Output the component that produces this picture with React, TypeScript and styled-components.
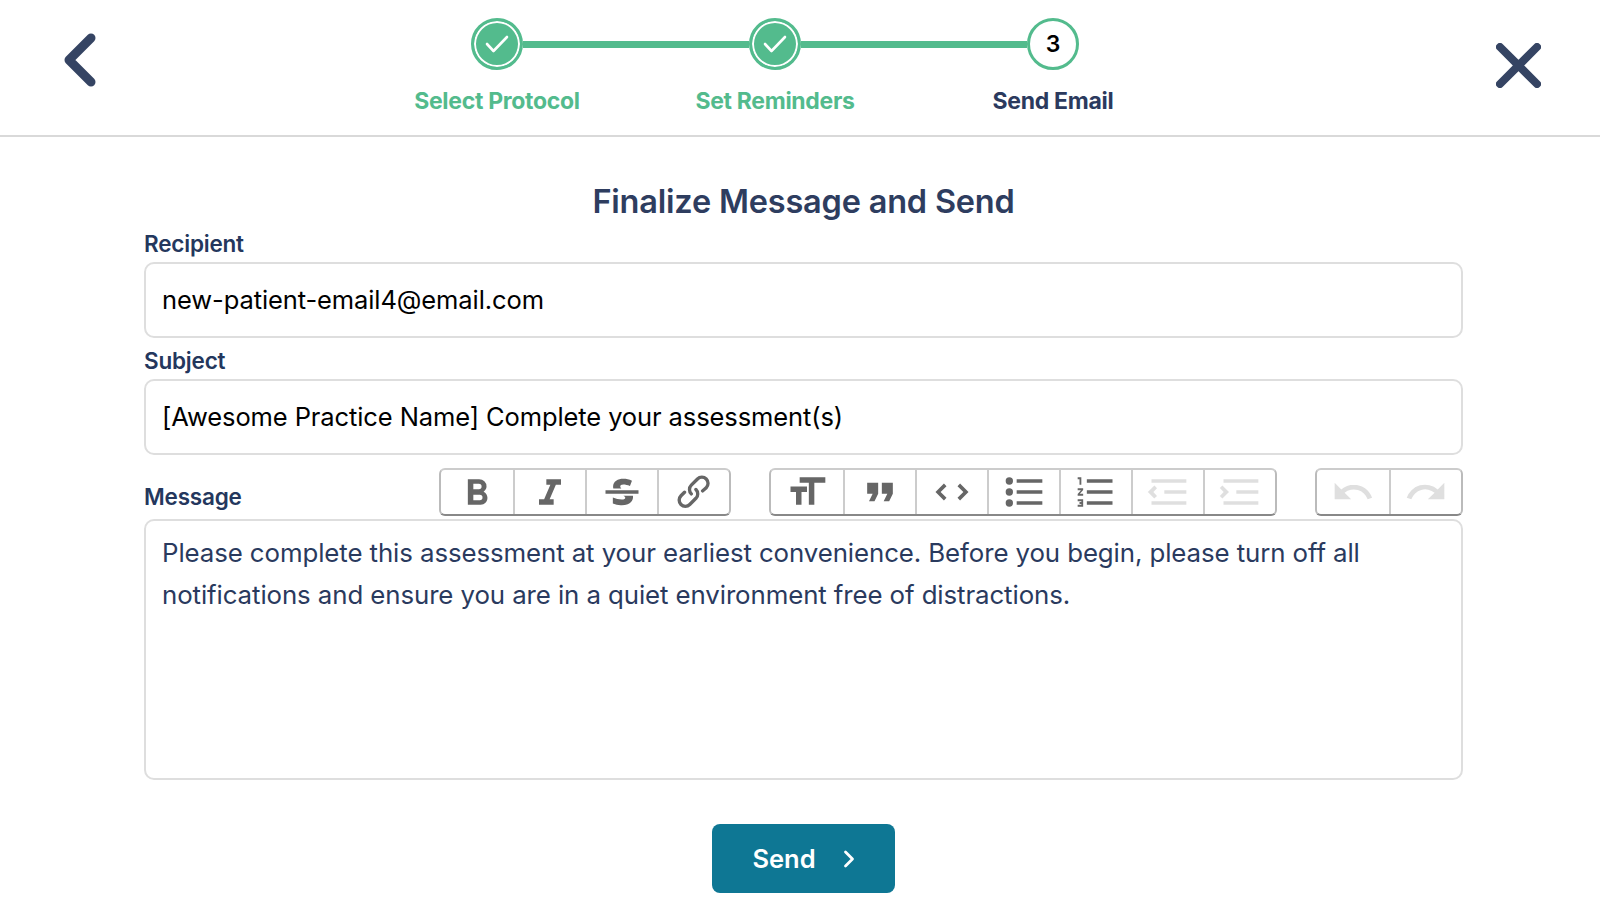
import styled, { createGlobalStyle } from 'styled-components'

const GlobalStyle = createGlobalStyle`
  html, body {
    margin: 0;
    padding: 0;
    background: #fff;
    font-family: Inter, Lato, "Liberation Sans", sans-serif;
  }
  * {
    box-sizing: border-box;
  }
`

const Page = styled.div`
  width: 1600px;
  height: 918px;
  overflow: hidden;
`

const Header = styled.header`
  display: flex;
  align-items: flex-start;
  height: 137px;
  padding: 18px 59px 0 64px;
  border-bottom: 2px solid #d9d9d9;
`

const HeaderIcon = styled.svg<{ $top: number }>`
  flex: none;
  margin-top: ${props => props.$top}px;
  fill: none;
  stroke: #354463;
  stroke-linecap: round;
  stroke-linejoin: round;
`

const Stepper = styled.nav`
  width: 834px;
  margin-left: 262px;
  margin-right: auto;
`

const Track = styled.div`
  display: flex;
  align-items: center;
  width: 608px;
  margin: 0 auto;
`

const Circle = styled.div<{ $done?: boolean }>`
  flex: none;
  display: flex;
  align-items: center;
  justify-content: center;
  width: 52px;
  height: 52px;
  border-radius: 50%;
  border: 3px solid #53bb8d;
  background: ${props => (props.$done ? '#53bb8d' : '#fff')};
  box-shadow: ${props => (props.$done ? 'inset 0 0 0 2px #fff' : 'none')};
  color: #000;
  font-size: 23px;
  font-weight: 600;
`

const Line = styled.div`
  flex: 1;
  height: 7px;
  background: #53bb8d;
`

const Labels = styled.div`
  display: grid;
  grid-template-columns: repeat(3, 1fr);
  margin-top: 16px;
`

const StepLabel = styled.div<{ $done?: boolean }>`
  text-align: center;
  font-size: 23px;
  line-height: 30px;
  font-weight: 700;
  letter-spacing: -0.3px;
  color: ${props => (props.$done ? '#53bb8d' : '#2b3a5e')};
`

const Form = styled.main`
  padding: 0 137px 0 144px;
`

const Title = styled.h1`
  margin: 42px 0 0;
  text-align: center;
  font-size: 32.5px;
  line-height: 46px;
  font-weight: 600;
  letter-spacing: -0.2px;
  color: #2e3d5f;
`

const Label = styled.label`
  display: block;
  font-size: 22.5px;
  line-height: 28px;
  font-weight: 600;
  letter-spacing: -0.2px;
  color: #24375d;
`

const RecipientLabel = styled(Label)`
  margin-top: 5px;
  margin-bottom: 4px;
`

const SubjectLabel = styled(Label)`
  margin-top: 9px;
  margin-bottom: 4px;
`

const Input = styled.input`
  display: block;
  width: 100%;
  height: 76px;
  padding: 0 16px 2px;
  border: 2px solid #dedede;
  border-radius: 10px;
  outline: none;
  background: #fff;
  color: #000;
  font-family: inherit;
  font-size: 25.5px;
  letter-spacing: -0.1px;
`

const MessageRow = styled.div`
  display: flex;
  align-items: flex-end;
  gap: 38px;
  margin-top: 13px;
`

const MessageLabel = styled(Label)`
  margin-right: auto;
  padding-bottom: 5px;
`

const ButtonGroup = styled.div`
  display: flex;
  height: 48px;
  border: 2px solid #bbb;
  border-top-color: #ccc;
  border-bottom-color: #888;
  border-radius: 6px;
`

const ToolButton = styled.button<{ $muted?: boolean }>`
  display: flex;
  align-items: center;
  justify-content: center;
  width: 72px;
  padding: 0;
  border: none;
  border-left: 2px solid #ccc;
  background: transparent;
  &:first-child {
    border-left: none;
  }
  svg {
    width: 44px;
    height: 44px;
    fill: ${props => (props.$muted ? '#dfdfdf' : '#666')};
  }
`

const Editor = styled.div`
  height: 261px;
  margin-top: 3px;
  padding: 11px 16px;
  border: 2px solid #dedede;
  border-radius: 10px;
  color: #2a3a5e;
  font-size: 25.85px;
  letter-spacing: -0.1px;
  line-height: 42px;
`

const Actions = styled.div`
  display: flex;
  justify-content: center;
  margin-top: 44px;
`

const SendButton = styled.button`
  display: flex;
  align-items: center;
  justify-content: center;
  gap: 27px;
  width: 183px;
  height: 69px;
  border: none;
  border-radius: 8px;
  background: #0e7794;
  color: #fff;
  font-family: inherit;
  font-size: 25.5px;
  font-weight: 600;
`

const Check = () => (
  <svg width="26" height="20" viewBox="0 0 26 20" fill="none" stroke="#fff" strokeWidth="2.6" strokeLinecap="round" strokeLinejoin="round">
    <path d="M3 10l6.5 7L23 3" />
  </svg>
)

const icons = {
  bold: 'M15.6 11.8c1-.7 1.6-1.8 1.6-2.8a4 4 0 0 0-4-4H7v14h7c2.1 0 3.7-1.7 3.7-3.8 0-1.5-.8-2.8-2.1-3.4zM10 7.5h3a1.5 1.5 0 1 1 0 3h-3v-3zm3.5 9H10v-3h3.5a1.5 1.5 0 1 1 0 3z',
  italic: 'M10 5v3h2.2l-3.4 8H6v3h8v-3h-2.2l3.4-8H18V5h-8z',
  strike: 'M12.73 14l.28.14c.26.15.45.3.57.44.12.14.18.3.18.5 0 .3-.15.56-.44.75-.3.2-.76.3-1.39.3A13.52 13.52 0 0 1 7 14.95v3.37a10.64 10.64 0 0 0 4.84.88c1.26 0 2.35-.19 3.29-.56.93-.37 1.64-.9 2.14-1.57s.74-1.45.74-2.32c0-.26-.02-.51-.06-.75h-5.21zM7.24 10c-.07-.3-.1-.62-.1-.96 0-1.4.6-2.5 1.7-3.2 1.1-.7 2.4-1 3.9-1 1.6 0 3.2.3 4.7 1l-1.1 2.9c-1.3-.5-2.5-.8-3.6-.8-.6 0-1 .1-1.3.3-.3.2-.4.5-.4.8 0 .4.2.7.6 1H7.24zM3 13h18v-2H3v2z',
  link: 'M9.88 13.7a4.3 4.3 0 0 1 0-6.07l3.37-3.37a4.26 4.26 0 0 1 6.07 0 4.3 4.3 0 0 1 0 6.06l-1.96 1.72a.91.91 0 1 1-1.3-1.3l1.97-1.71a2.46 2.46 0 0 0-3.48-3.48l-3.38 3.37a2.46 2.46 0 0 0 0 3.48.91.91 0 1 1-1.3 1.3zM4.25 19.46a4.3 4.3 0 0 1 0-6.07l1.93-1.9a.91.91 0 1 1 1.3 1.3l-1.93 1.9a2.46 2.46 0 0 0 3.48 3.48l3.37-3.38c.96-.96.96-2.52 0-3.48a.91.91 0 1 1 1.3-1.3 4.3 4.3 0 0 1 0 6.07l-3.38 3.38a4.26 4.26 0 0 1-6.07 0z',
  heading: 'M12 9v3H9v7H6v-7H3V9h9zM8 4h14v3h-6v12h-3V7H8V4z',
  quote: 'M6 17h3l2-4V7H5v6h3zm8 0h3l2-4V7h-6v6h3z',
  code: 'M18.2 12L15 15.2l1.4 1.4L21 12l-4.6-4.6L15 8.8l3.2 3.2zM5.8 12L9 8.8 7.6 7.4 3 12l4.6 4.6L9 15.2 5.8 12z',
  bullets: 'M4 4a2 2 0 1 0 0 4 2 2 0 0 0 0-4zm0 6a2 2 0 1 0 0 4 2 2 0 0 0 0-4zm0 6a2 2 0 1 0 0 4 2 2 0 0 0 0-4zm4 3h14v-2H8v2zm0-6h14v-2H8v2zm0-8v2h14V5H8z',
  numbers: 'M2 17h2v.5H3v1h1v.5H2v1h3v-4H2v1zm1-9h1V4H2v1h1v3zm-1 3h1.8L2 13.1v.9h3v-1H3.2L5 10.9V10H2v1zm5-6v2h14V5H7zm0 14h14v-2H7v2zm0-6h14v-2H7v2z',
  outdent: 'M3 19h19v-2H3v2zm7-6h12v-2H10v2zm-8.3-.3l2.8 2.9L6 14.2 4 12l2-2-1.4-1.5L1 12l.7.7zM3 5v2h19V5H3z',
  indent: 'M3 19h19v-2H3v2zm7-6h12v-2H10v2zm-6.9-1L1 14.2l1.4 1.4L6 12l-.7-.7-2.9-2.9L1 9.8 3.1 12zM3 5v2h19V5H3z',
  undo: 'M12.5 8c-2.6 0-5 1-6.9 2.6L2 7v9h9l-3.6-3.6A8 8 0 0 1 20 16l2.4-.8a10.5 10.5 0 0 0-10-7.2z',
  redo: 'M18.4 10.6a10.5 10.5 0 0 0-16.9 4.6L4 16a8 8 0 0 1 12.7-3.6L13 16h9V7l-3.6 3.6z',
}

function Tool({ icon, muted }: { icon: keyof typeof icons; muted?: boolean }) {
  return (
    <ToolButton type="button" $muted={muted} aria-label={icon}>
      <svg viewBox="0 0 24 24">
        <path d={icons[icon]} />
      </svg>
    </ToolButton>
  )
}

function App() {
  return (
    <Page>
      <GlobalStyle />
      <Header>
        <HeaderIcon $top={15} width="32" height="54" viewBox="0 0 32 54" strokeWidth="9">
          <path d="M27 5L5 27l22 22" />
        </HeaderIcon>
        <Stepper>
          <Track>
            <Circle $done><Check /></Circle>
            <Line />
            <Circle $done><Check /></Circle>
            <Line />
            <Circle>3</Circle>
          </Track>
          <Labels>
            <StepLabel $done>Select Protocol</StepLabel>
            <StepLabel $done>Set Reminders</StepLabel>
            <StepLabel>Send Email</StepLabel>
          </Labels>
        </Stepper>
        <HeaderIcon $top={25} width="45" height="45" viewBox="0 0 45 45" strokeWidth="8">
          <path d="M4 4l37 37M41 4L4 41" />
        </HeaderIcon>
      </Header>
      <Form>
        <Title>Finalize Message and Send</Title>
        <RecipientLabel>Recipient</RecipientLabel>
        <Input readOnly value="new-patient-email4@email.com" />
        <SubjectLabel>Subject</SubjectLabel>
        <Input readOnly value="[Awesome Practice Name] Complete your assessment(s)" />
        <MessageRow>
          <MessageLabel>Message</MessageLabel>
          <ButtonGroup>
            <Tool icon="bold" />
            <Tool icon="italic" />
            <Tool icon="strike" />
            <Tool icon="link" />
          </ButtonGroup>
          <ButtonGroup>
            <Tool icon="heading" />
            <Tool icon="quote" />
            <Tool icon="code" />
            <Tool icon="bullets" />
            <Tool icon="numbers" />
            <Tool icon="outdent" muted />
            <Tool icon="indent" muted />
          </ButtonGroup>
          <ButtonGroup>
            <Tool icon="undo" muted />
            <Tool icon="redo" muted />
          </ButtonGroup>
        </MessageRow>
        <Editor>
          Please complete this assessment at your earliest convenience. Before you begin, please turn off all notifications and ensure you are in a quiet environment free of distractions.
        </Editor>
        <Actions>
          <SendButton type="button">
            Send
            <svg width="12" height="18" viewBox="0 0 12 18" fill="none" stroke="#fff" strokeWidth="2.8" strokeLinecap="round" strokeLinejoin="round">
              <path d="M2.5 2l7 7-7 7" />
            </svg>
          </SendButton>
        </Actions>
      </Form>
    </Page>
  )
}

export default App
